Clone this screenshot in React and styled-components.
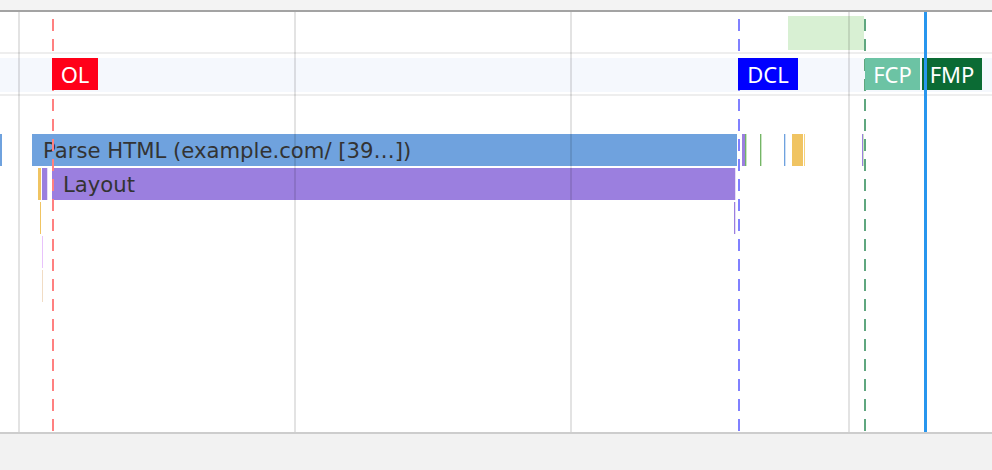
import React from "react";
import styled, { createGlobalStyle } from "styled-components";

const GlobalStyle = createGlobalStyle`
    html, body, #root {
        margin: 0;
        height: 100%;
    }
    body {
        font-family: "DejaVu Sans", "Liberation Sans", sans-serif;
        background: #f2f2f2;
        overflow: hidden;
    }
`;

const Page = styled.div`
    display: flex;
    flex-direction: column;
    height: 470px;
    width: 992px;
`;

const TopStrip = styled.div`
    height: 10px;
    background: #f3f3f3;
    border-bottom: 2px solid #a3a3a3;
`;

const Chart = styled.div`
    position: relative;
    height: 420px;
    background: #fff;
    overflow: hidden;
    display: flex;
    flex-direction: column;
`;

const Footer = styled.div`
    flex: 1;
    background: #f2f2f2;
    border-top: 2px solid #cdcdcd;
`;

const NetworkTrack = styled.div`
    position: relative;
    height: 40px;
`;

const Divider = styled.div`
    height: 2px;
    flex: none;
    background: #eeeeee;
`;

const MarkerRow = styled.div`
    position: relative;
    height: 34px;
    flex: none;
    margin: 4px 0 2px;
    background: #f5f8fd;
`;

const FlameArea = styled.div`
    padding-top: 38px;
    display: flex;
    flex-direction: column;
`;

const FlameRow = styled.div`
    position: relative;
    height: 34px;
`;

// things whose place is a point on the time axis
const Span = styled.div.attrs((p) => ({
    style: { left: p.$x + "px", width: p.$w + "px" },
}))`
    position: absolute;
    top: 0;
    height: 32px;
    background: ${(p) => p.$color};
    display: flex;
    align-items: center;
    overflow: hidden;
`;

const SpanText = styled.span`
    padding-left: 11px;
    white-space: nowrap;
    color: #333;
    font-size: 21.2px;
`;

const Range = styled.div.attrs((p) => ({
    style: { left: p.$x + "px", width: p.$w + "px" },
}))`
    position: absolute;
    top: 4px;
    height: 34px;
    background: #d8f0d3;
`;

const Label = styled.div.attrs((p) => ({
    style: { left: p.$x + "px", width: p.$w + "px" },
}))`
    position: absolute;
    top: 0;
    height: 32px;
    z-index: 3;
    display: flex;
    align-items: center;
    justify-content: center;
    background: ${(p) => p.$color};
    color: #fff;
    font-family: "Noto Sans", "Open Sans", sans-serif;
    font-size: 22px;
`;

const GridLine = styled.div.attrs((p) => ({ style: { left: p.$x + "px" } }))`
    position: absolute;
    top: 0;
    bottom: 0;
    width: 2px;
    z-index: 2;
    background: rgba(0, 0, 0, 0.11);
`;

const DashLine = styled.div.attrs((p) => ({ style: { left: p.$x + "px" } }))`
    position: absolute;
    top: 0;
    bottom: 0;
    width: 2px;
    z-index: 2;
    background: repeating-linear-gradient(
        to bottom,
        transparent 0 7px,
        ${(p) => p.$color} 7px 19px,
        transparent 19px 20px
    );
`;

const Cursor = styled.div`
    position: absolute;
    top: 0;
    bottom: 0;
    left: 924px;
    width: 3px;
    z-index: 4;
    background: #2896ee;
`;

const BLUE = "#6fa2de";
const PURPLE = "#9b7fdf";
const YELLOW = "#f0c462";
const GREEN = "#74b566";

const rows = [
    [
        { x: 0, w: 2, color: BLUE },
        { x: 32, w: 705, color: BLUE, text: "Parse HTML (example.com/ [39…])" },
        { x: 742, w: 3, color: PURPLE },
        { x: 745, w: 1, color: GREEN },
        { x: 746, w: 1, color: "#cbe5c4" },
        { x: 760, w: 1, color: GREEN },
        { x: 761, w: 1, color: "#cbe5c4" },
        { x: 784, w: 1, color: BLUE },
        { x: 785, w: 1, color: "#cfe0f5" },
        { x: 792, w: 11, color: YELLOW },
        { x: 804, w: 1, color: "#f5d27c" },
        { x: 862, w: 1, color: PURPLE },
        { x: 863, w: 1, color: "#cbe5c4" },
    ],
    [
        { x: 38, w: 3, color: YELLOW },
        { x: 42, w: 5, color: PURPLE },
        { x: 47, w: 1, color: "#e6dcf8" },
        { x: 52, w: 683, color: PURPLE, text: "Layout" },
        { x: 735, w: 1, color: "#e6dcf8" },
    ],
    [
        { x: 40, w: 1, color: YELLOW },
        { x: 734, w: 1, color: PURPLE },
        { x: 735, w: 1, color: "#e6dcf8" },
    ],
    [{ x: 42, w: 1, color: "#e8c2fb" }],
    [{ x: 42, w: 1, color: "#f1dcc4" }],
];

const markers = [
    { name: "OL", x: 52, w: 46, color: "#ff0019" },
    { name: "DCL", x: 738, w: 60, color: "#0000ff" },
    { name: "FCP", x: 865, w: 55, color: "#6cc3a4" },
    { name: "FMP", x: 922, w: 60, color: "#0b6b34" },
];

const dashes = [
    { x: 52, color: "#ff8080" },
    { x: 738, color: "#8080ff" },
    { x: 864, color: "#5fa77f" },
];

const grid = [18, 294, 570, 848];

const App = () => (
    <Page>
        <GlobalStyle />
        <TopStrip />
        <Chart>
            <NetworkTrack>
                <Range $x={788} $w={76} />
            </NetworkTrack>
            <Divider />
            <MarkerRow>
                {markers.map((m) => (
                    <Label key={m.name} $x={m.x} $w={m.w} $color={m.color}>
                        {m.name}
                    </Label>
                ))}
            </MarkerRow>
            <Divider />
            <FlameArea>
                {rows.map((row, i) => (
                    <FlameRow key={i}>
                        {row.map((s, j) => (
                            <Span key={j} $x={s.x} $w={s.w} $color={s.color}>
                                {s.text && <SpanText>{s.text}</SpanText>}
                            </Span>
                        ))}
                    </FlameRow>
                ))}
            </FlameArea>

            {grid.map((x) => (
                <GridLine key={x} $x={x} />
            ))}
            {dashes.map((d) => (
                <DashLine key={d.x} $x={d.x} $color={d.color} />
            ))}
            <Cursor />
        </Chart>
        <Footer />
    </Page>
);

export default App;
